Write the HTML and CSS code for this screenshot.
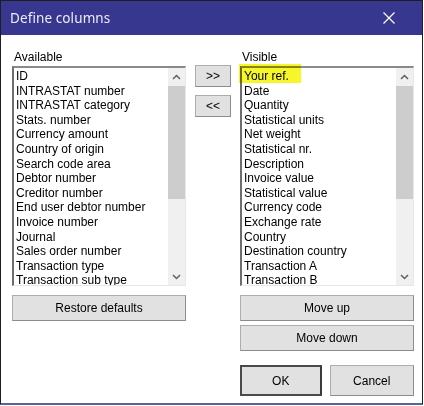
FILE: index.html
```html
<!doctype html>
<html>
<head>
<meta charset="utf-8">
<title>Define columns</title>
<link rel="stylesheet" href="styles.css">
</head>
<body>
<div class="dialog">
	<div class="titlebar">
		<span class="title">Define columns</span>
		<svg class="close" width="12" height="12" viewBox="0 0 12 12"><path d="M0.5 0.5L11.5 11.5M11.5 0.5L0.5 11.5" stroke="#fff" stroke-width="1.2" fill="none"/></svg>
	</div>
	<div class="content">
		<div class="cols">
			<div class="col">
				<div class="label">Available</div>
				<div class="listbox">
					<ul class="items">
						<li>ID</li>
						<li>INTRASTAT number</li>
						<li>INTRASTAT category</li>
						<li>Stats. number</li>
						<li>Currency amount</li>
						<li>Country of origin</li>
						<li>Search code area</li>
						<li>Debtor number</li>
						<li>Creditor number</li>
						<li>End user debtor number</li>
						<li>Invoice number</li>
						<li>Journal</li>
						<li>Sales order number</li>
						<li>Transaction type</li>
						<li>Transaction sub type</li>
					</ul>
					<div class="scrollbar">
						<div class="arrow"><svg width="9" height="6" viewBox="0 0 9 6"><path d="M1 5L4.5 1.5L8 5" stroke="#606060" stroke-width="1.5" fill="none"/></svg></div>
						<div class="track"><div class="thumb"></div></div>
						<div class="arrow"><svg width="9" height="6" viewBox="0 0 9 6"><path d="M1 1L4.5 4.5L8 1" stroke="#606060" stroke-width="1.5" fill="none"/></svg></div>
					</div>
				</div>
				<button class="btn wide">Restore defaults</button>
			</div>
			<div class="mid">
				<button class="btn small">&gt;&gt;</button>
				<button class="btn small">&lt;&lt;</button>
			</div>
			<div class="col">
				<div class="label">Visible</div>
				<div class="listbox">
					<span class="marker"></span>
					<ul class="items">
						<li>Your ref.</li>
						<li>Date</li>
						<li>Quantity</li>
						<li>Statistical units</li>
						<li>Net weight</li>
						<li>Statistical nr.</li>
						<li>Description</li>
						<li>Invoice value</li>
						<li>Statistical value</li>
						<li>Currency code</li>
						<li>Exchange rate</li>
						<li>Country</li>
						<li>Destination country</li>
						<li>Transaction A</li>
						<li>Transaction B</li>
					</ul>
					<div class="scrollbar">
						<div class="arrow"><svg width="9" height="6" viewBox="0 0 9 6"><path d="M1 5L4.5 1.5L8 5" stroke="#606060" stroke-width="1.5" fill="none"/></svg></div>
						<div class="track"><div class="thumb"></div></div>
						<div class="arrow"><svg width="9" height="6" viewBox="0 0 9 6"><path d="M1 1L4.5 4.5L8 1" stroke="#606060" stroke-width="1.5" fill="none"/></svg></div>
					</div>
				</div>
				<button class="btn wide">Move up</button>
				<button class="btn wide down">Move down</button>
				<div class="actions">
					<button class="btn ok">OK</button>
					<button class="btn cancel">Cancel</button>
				</div>
			</div>
		</div>
	</div>
</div>
</body>
</html>
```
FILE: styles.css
```css
*{margin:0; padding:0; box-sizing:border-box;}
html,body{width:424px; height:406px; overflow:hidden; background:#fff;}
body{font-family:"Liberation Sans", Arial, sans-serif; font-size:12px; color:#000;}
li{list-style:none;}
.dialog{width:423px; height:405px; border:1px solid #1e1e1e; border-bottom:2px solid #5664a6; background:#fff; display:flex; flex-direction:column;}
.titlebar{height:34px; background:#37378f; display:flex; align-items:center; justify-content:space-between; padding:0 27px 0 9px;}
.title{font-family:"Noto Sans", "Open Sans", sans-serif; font-size:13.5px; color:#ececf6; letter-spacing:0.1px;}
.content{padding:15px 0 0 11px;}
.cols{display:flex;}
.col{width:174px; display:flex; flex-direction:column;}
.mid{width:54px; padding:15px 0 0 9px; display:flex; flex-direction:column; gap:8px;}
.label{height:16px; line-height:14px; padding-left:2px;}
.listbox{position:relative; height:220px; border-style:solid; border-width:2px 1px 1px 2px; border-color:#8a8a8a #e8e8e8 #e8e8e8 #6e6e6e; display:flex; background:#fff;}
.items{flex:1; overflow:hidden; padding:1px 0 0 2px; line-height:14.6px; white-space:nowrap;}
.scrollbar{width:17px; background:#f0f0f0; display:flex; flex-direction:column;}
.arrow{height:17px; display:flex; align-items:center; justify-content:center;}
.track{flex:1; padding:1px 0 0 0;}
.thumb{height:113px; background:#cdcdcd; margin:0 0 0 0;}
.marker{position:absolute; left:-3px; top:-4px; width:62px; height:19px; background:#f6f62a; mix-blend-mode:multiply;}
.btn{font-family:"Liberation Sans", Arial, sans-serif; font-size:12px; color:#000; background:#e1e1e1; border:1px solid #adadad; border-right-color:#8c8c8c; border-bottom-color:#8c8c8c; display:flex; align-items:center; justify-content:center;}
.small{width:36px; height:22px;}
.wide{height:26px; margin-top:9px;}
.down{margin-top:4px;}
.actions{display:flex; gap:8px; margin-top:14px;}
.ok{width:82px; height:31px; border:2px solid #4a4a4a; border-right-color:#3a3a3a;}
.cancel{width:85px; height:31px;}
```
